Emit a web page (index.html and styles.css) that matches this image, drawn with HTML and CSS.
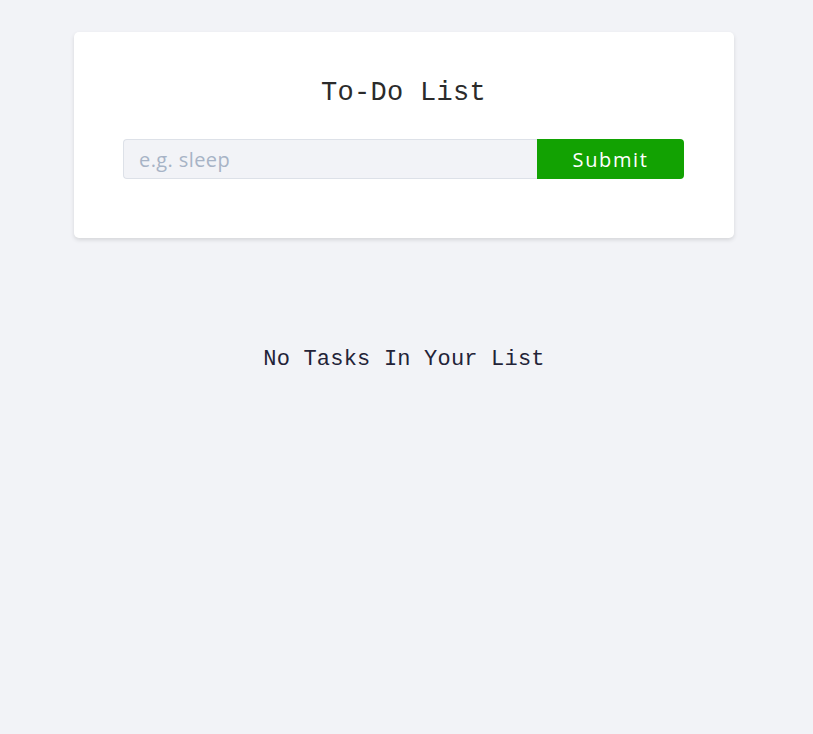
FILE: index.html
```html
<!DOCTYPE html>
<html>
<head>
<meta charset="utf-8">
<link rel="stylesheet" href="styles.css">
</head>
<body>
<main class="page">
  <section class="card">
    <h1 class="title">To-Do List</h1>
    <form class="form">
      <input class="input" type="text" placeholder="e.g. sleep">
      <button class="btn" type="button">Submit</button>
    </form>
  </section>
  <p class="empty">No Tasks In Your List</p>
</main>
</body>
</html>
```
FILE: styles.css
```css
html, body {
  margin: 0;
  padding: 0;
  background: #f2f3f7;
  height: 100%;
}
.page {
  padding: 32px 0 0 74px;
  width: 660px;
}
.card {
  background: #ffffff;
  border-radius: 5px;
  box-shadow: 0 2px 4px rgba(0,0,0,0.12);
  padding: 43px 50px 58px 49px;
  box-sizing: border-box;
  width: 660px;
  height: 206px;
}
.title {
  margin: 0 0 28px 0;
  text-align: center;
  font-family: "Liberation Mono", "DejaVu Sans Mono", monospace;
  font-weight: 400;
  font-size: 27px;
  line-height: 36px;
  color: #2b2b2b;
  letter-spacing: 0.3px;
}
.form {
  display: flex;
  height: 40px;
}
.input {
  flex: 1;
  margin: 0;
  border: 1px solid #dde1e8;
  border-right: none;
  border-radius: 4px 0 0 4px;
  background: #f2f3f7;
  padding: 0 15px;
  font-family: "Open Sans", "Noto Sans", sans-serif;
  font-size: 20px;
  letter-spacing: 0.4px;
  color: #333;
  outline: none;
}
.input::placeholder {
  color: #a7b3c6;
}
.btn {
  width: 147px;
  border: none;
  margin: 0;
  background: #12a202;
  color: #ffffff;
  border-radius: 0 4px 4px 0;
  font-family: "Open Sans", "Noto Sans", sans-serif;
  font-size: 20px;
  letter-spacing: 1.6px;
  cursor: pointer;
}
.empty {
  margin: 108px 0 0 0;
  text-align: center;
  font-family: "Liberation Mono", "DejaVu Sans Mono", monospace;
  font-size: 22px;
  line-height: 28px;
  color: #232338;
  letter-spacing: 0.2px;
}
```
